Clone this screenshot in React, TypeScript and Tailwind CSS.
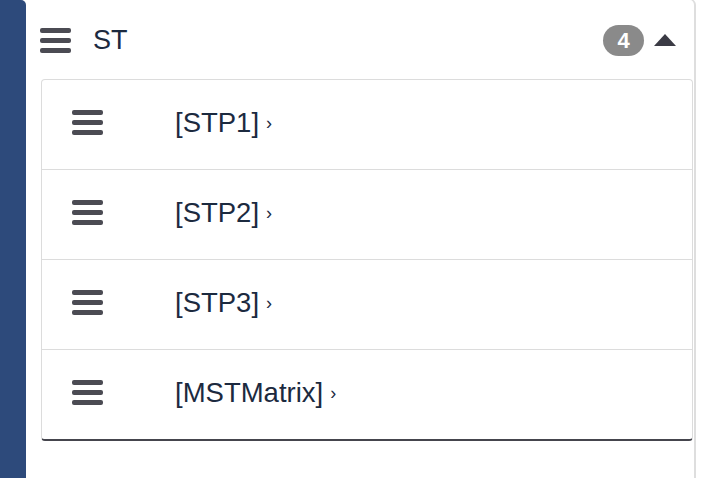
import React from "react";

const items = ["[STP1]", "[STP2]", "[STP3]", "[MSTMatrix]"];

const Bars = () => (
  <div className="flex w-[31px] flex-col gap-[5px]">
    <span className="block h-[5px] rounded-[2px] bg-[#4b4b53]" />
    <span className="block h-[5px] rounded-[2px] bg-[#4b4b53]" />
    <span className="block h-[5px] rounded-[2px] bg-[#4b4b53]" />
  </div>
);

export default function App() {
  return (
    <div
      className="flex h-[478px] w-[702px] overflow-hidden bg-white"
      style={{ fontFamily: '"Liberation Sans", Arial, sans-serif' }}
    >
      <div className="h-full w-[26px] shrink-0 rounded-tr-[5px] bg-[#2d4a7b]" />
      <div className="-mt-px mr-[6px] flex flex-1 flex-col rounded-tr-[6px] border-t border-r-2 border-[#dedede]">
        {/* header */}
        <div className="flex h-[79px] shrink-0 items-center pl-[14px] pr-[18px] pt-px">
          <Bars />
          <span className="ml-[22px] text-[27px] leading-none text-[#1c2a3f]">ST</span>
          <div className="ml-auto flex items-center">
            <span className="flex h-[31px] w-[41px] items-center justify-center rounded-full bg-[#8a8a8a] text-[22px] font-bold text-white">
              4
            </span>
            <svg className="ml-[10px]" width="22" height="12" viewBox="0 0 22 12">
              <polygon points="11,0 22,12 0,12" fill="#3b3b45" />
            </svg>
          </div>
        </div>

        {/* list */}
        <div className="ml-[15px] mr-[1px] overflow-hidden rounded-[4px] border border-b-2 border-[#dcdcdc] border-b-[#45454d]">
          {items.map((label, i) => (
            <div
              key={label}
              className={`flex items-center pb-[4px] pl-[30px] ${i > 0 ? "h-[90px] border-t border-[#dcdcdc]" : "h-[89px]"}`}
            >
              <Bars />
              <span className="ml-[72px] text-[27.5px] leading-none text-[#1c2a3f]">{label}</span>
              <span className="ml-[7px] text-[18px] leading-none text-[#1c2a3f]">›</span>
            </div>
          ))}
        </div>
      </div>
    </div>
  );
}
